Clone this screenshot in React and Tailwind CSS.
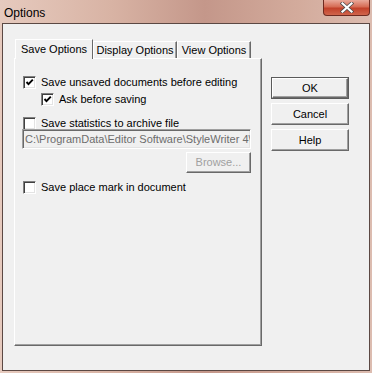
import React from "react";

const ui = { fontFamily: '"Liberation Sans", Arial, sans-serif' };

function Check({ checked }) {
    return (
        <span className="w-[13px] h-[13px] shrink-0 bg-white border border-t-[#808080] border-l-[#808080] border-b-white border-r-white shadow-[inset_1px_1px_0_#404040,inset_-1px_-1px_0_#e3e3e3] flex items-center justify-center">
            {checked && (
                <svg width="9" height="9" viewBox="0 0 9 9">
                    <path d="M1.5 4 L3.5 6.2 L7.8 1.6" fill="none" stroke="#000" strokeWidth="1.9" />
                </svg>
            )}
        </span>
    );
}

function CheckRow({ checked, label, className }) {
    return (
        <div className={"flex items-center gap-[5px] h-[13px] " + (className || "")}>
            <Check checked={checked} />
            <span className="text-[11px] leading-none text-black">{label}</span>
        </div>
    );
}

const raised = "border border-t-white border-l-white border-b-[#696969] border-r-[#696969] shadow-[inset_-1px_-1px_0_#a0a0a0] bg-[#f0f0f0]";

function Btn({ children, def }) {
    return (
        <div className={"w-[78px] h-[22px] " + (def ? "border border-[#5a5a5a]" : "")}>
            <div className={"w-full h-full flex items-center justify-center text-[11px] text-black " + raised}>
                {children}
            </div>
        </div>
    );
}

export default function App() {
    return (
        <div style={ui} className="w-[372px] h-[373px] flex flex-col bg-[linear-gradient(90deg,#e6cabe_0%,#d8b3a4_30%,#c4978a_55%,#d3ab9c_80%,#dcbcb0_100%)]">
            {/* title bar */}
            <div className="h-[23px] flex items-start justify-between shrink-0">
                <span className="text-[12px] text-black ml-[4px] mt-[4px]">Options</span>
                <div className="w-[47px] h-[16px] mr-[2px] rounded-b-[4px] border border-t-0 border-[#6e2a20] bg-[linear-gradient(180deg,#e9a99a_0%,#d66c55_45%,#c2412a_55%,#d0654c_100%)] flex items-center justify-center">
                    <svg width="14" height="11" viewBox="0 0 14 11">
                        <path d="M2.5 1.5 L11.5 9.5 M11.5 1.5 L2.5 9.5" stroke="#4a4a4a" strokeWidth="3.6" strokeLinecap="square" />
                        <path d="M2.5 1.5 L11.5 9.5 M11.5 1.5 L2.5 9.5" stroke="#fff" strokeWidth="2.2" strokeLinecap="square" />
                    </svg>
                </div>
            </div>

            {/* client */}
            <div className="flex-1 ml-[2px] mr-[2px] mb-[2px] border border-[#5b4843] bg-[#f0f0f0] flex pl-[11px] pt-[15px]">
                <div className="flex flex-col">
                    {/* tabs */}
                    <div className="flex items-end h-[19px] ml-[1px] relative z-10">
                        <div className="h-[20px] w-[78px] -mb-[1px] bg-[#f0f0f0] border-t border-l border-white border-r border-r-[#696969] flex items-center justify-center text-[11px] text-black">
                            Save Options
                        </div>
                        <div className="h-[17px] w-[84px] border-t border-l border-white border-r border-r-[#696969] shadow-[inset_-1px_0_0_#a0a0a0] flex items-center justify-center text-[11px] text-black">
                            Display Options
                        </div>
                        <div className="h-[17px] w-[74px] border-t border-l border-white border-r border-r-[#696969] shadow-[inset_-1px_0_0_#a0a0a0] flex items-center justify-center text-[11px] text-black">
                            View Options
                        </div>
                    </div>
                    {/* panel */}
                    <div className="w-[248px] h-[288px] border border-t-white border-l-white border-b-[#696969] border-r-[#696969] shadow-[inset_-1px_-1px_0_#a0a0a0] flex flex-col pl-[8px] pt-[17px]">
                        <CheckRow checked label="Save unsaved documents before editing" />
                        <CheckRow checked label="Ask before saving" className="ml-[18px] mt-[4px]" />
                        <CheckRow label="Save statistics to archive file" className="mt-[11px]" />
                        <div className="w-[229px] h-[20px] -ml-[1px] mt-[-1px] border border-t-[#a0a0a0] border-l-[#a0a0a0] border-b-white border-r-white shadow-[inset_1px_1px_0_#696969,inset_-1px_-1px_0_#e3e3e3] bg-[#f0f0f0] overflow-hidden whitespace-nowrap flex items-center pl-[2px] text-[11px] text-[#6d6d6d]">
                            C:\ProgramData\Editor Software\StyleWriter 4\
                        </div>
                        <div className={"w-[65px] h-[21px] ml-[163px] mt-[3px] flex items-center justify-center text-[11px] text-[#a0a0a0] " + raised}>
                            Browse...
                        </div>
                        <CheckRow label="Save place mark in document" className="mt-[8px]" />
                    </div>
                </div>
                {/* buttons */}
                <div className="flex flex-col gap-[4px] ml-[9px] mt-[38px]">
                    <Btn def>OK</Btn>
                    <Btn>Cancel</Btn>
                    <Btn>Help</Btn>
                </div>
            </div>
        </div>
    );
}
